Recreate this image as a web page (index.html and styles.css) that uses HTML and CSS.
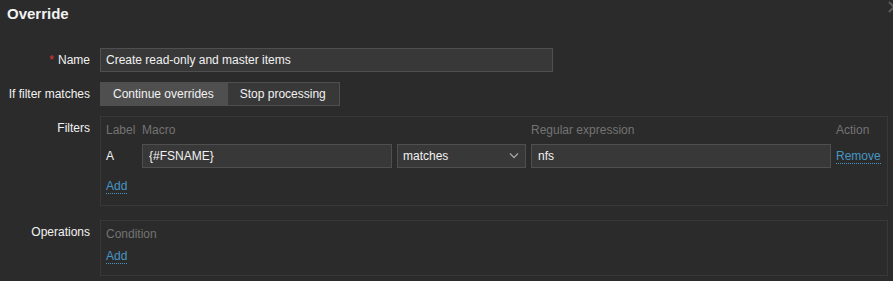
FILE: index.html
```html
<!DOCTYPE html>
<html>
<head>
  <link rel="stylesheet" href="styles.css">
</head>
<body>
  <div class="dialog">
    <h4 class="title">Override</h4>
    <button class="close" aria-label="Close">
      <svg width="12" height="12" viewBox="0 0 12 12"><path d="M1 1 L11 11 M11 1 L1 11" stroke="#5c5c5c" stroke-width="2"/></svg>
    </button>

    <div class="form">
      <label class="form-label"><span class="asterisk">*</span>Name</label>
      <div class="field">
        <input class="text name-input" type="text" value="Create read-only and master items">
      </div>

      <label class="form-label">If filter matches</label>
      <div class="field">
        <div class="radio-list">
          <span class="radio checked">Continue overrides</span>
          <span class="radio">Stop processing</span>
        </div>
      </div>

      <label class="form-label">Filters</label>
      <div class="field">
        <div class="box">
          <div class="filter-grid">
            <div class="th">Label</div>
            <div class="th">Macro</div>
            <div class="th"></div>
            <div class="th">Regular expression</div>
            <div class="th">Action</div>

            <div class="td">A</div>
            <div class="td"><input class="text" type="text" value="{#FSNAME}"></div>
            <div class="td">
              <div class="select">
                <span>matches</span>
                <svg width="10" height="6" viewBox="0 0 10 6"><path d="M1 0.5 L5 4.5 L9 0.5" fill="none" stroke="#a0a0a0" stroke-width="1.4"/></svg>
              </div>
            </div>
            <div class="td"><input class="text" type="text" value="nfs"></div>
            <div class="td"><a class="link" href="#">Remove</a></div>
          </div>
          <div class="add-row filters-add"><a class="link" href="#">Add</a></div>
        </div>
      </div>

      <label class="form-label ops-label">Operations</label>
      <div class="field ops-field">
        <div class="box">
          <div class="th">Condition</div>
          <div class="add-row"><a class="link" href="#">Add</a></div>
        </div>
      </div>
    </div>
  </div>
</body>
</html>
```

FILE: styles.css
```css
body {
  margin: 0;
  background: #2b2b2b;
  color: #f2f2f2;
  font-family: "Liberation Sans", Arial, sans-serif;
  font-size: 12px;
  overflow: hidden;
}

.dialog {
  position: relative;
  padding: 4px 5px 0 0;
}

.title {
  margin: 0 0 24px 7px;
  font-size: 15px;
  font-weight: bold;
  line-height: 20px;
  color: #f2f2f2;
}

/* close button sits half outside the window */
.close {
  position: absolute;
  top: 0;
  right: -8px;
  width: 14px;
  height: 14px;
  padding: 1px;
  border: 0;
  background: none;
}

.form {
  display: grid;
  grid-template-columns: 90px 1fr;
  column-gap: 10px;
  row-gap: 10px;
}

.form-label {
  text-align: right;
  line-height: 24px;
  white-space: nowrap;
}

.asterisk {
  color: #e33734;
  margin-right: 4px;
}

.ops-label,
.ops-field {
  margin-top: 4px;
}

input.text {
  box-sizing: border-box;
  height: 24px;
  width: 100%;
  margin: 0;
  padding: 0 5px;
  background: #383838;
  border: 1px solid #4f4f4f;
  color: #f2f2f2;
  font-family: inherit;
  font-size: 12px;
  outline: none;
}

.name-input {
  width: 453px !important;
}

.radio-list {
  display: inline-flex;
  height: 24px;
}

.radio {
  box-sizing: border-box;
  padding: 0 12px;
  line-height: 22px;
  background: #383838;
  border: 1px solid #4f4f4f;
}

.radio.checked {
  background: #4f4f4f;
}

.radio:last-child {
  padding-right: 13px;
}

.box {
  border: 1px solid #383838;
  padding: 5px 5px 11px;
}

.filter-grid {
  display: grid;
  grid-template-columns: 31px 250px 129px 300px 1fr;
  column-gap: 5px;
  row-gap: 6px;
}

.th {
  color: #737373;
  line-height: 16px;
}

.td {
  line-height: 24px;
}

.td input.text {
  padding-left: 6px;
}

.select {
  box-sizing: border-box;
  height: 24px;
  display: flex;
  align-items: center;
  justify-content: space-between;
  padding: 0 6px 0 5px;
  background: #383838;
  border: 1px solid #4f4f4f;
}

.link {
  color: #4796c4;
  text-decoration: none;
  border-bottom: 1px dotted #4796c4;
}

.add-row {
  margin-top: 6px;
  line-height: 16px;
}

.filters-add {
  margin-top: 10px;
}
```
